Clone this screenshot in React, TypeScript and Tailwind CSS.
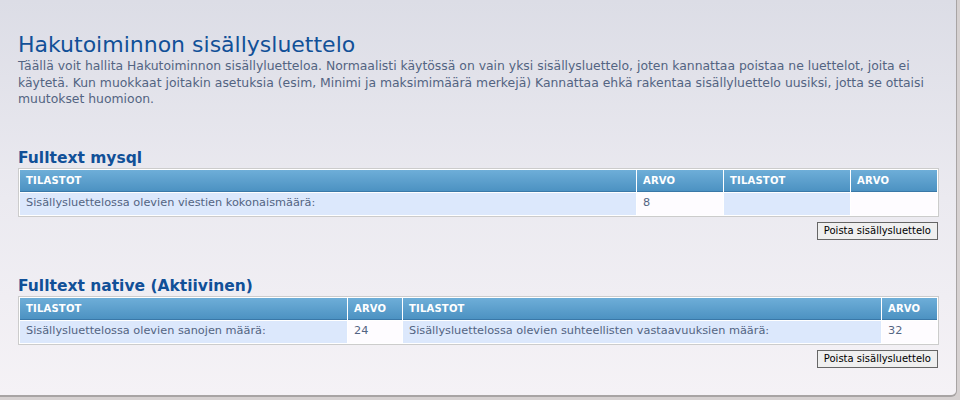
import React from "react";

type Cell = { label: string; width: number };

const font = { fontFamily: '"DejaVu Sans", Verdana, sans-serif' };

function StatsTable({ cols, row }: { cols: Cell[]; row: string[] }) {
  return (
    <table className="w-[920px] border-separate border-spacing-[1px] border border-[#cccccc] bg-white table-fixed">
      <thead>
        <tr>
          {cols.map((c, i) => (
            <th
              key={i}
              style={{ width: c.width }}
              className="h-[22px] px-[6px] text-left text-[10px] font-bold uppercase tracking-[0.2px] text-white bg-gradient-to-b from-[#6eaed8] to-[#4c92c2] border-b border-[#3a78a8]"
            >
              {c.label}
            </th>
          ))}
        </tr>
      </thead>
      <tbody>
        <tr>
          {row.map((v, i) => (
            <td
              key={i}
              className={`h-[22px] px-[6px] text-[11.3px] text-[#536482] ${i % 2 === 0 ? "bg-[#dce8fc]" : "bg-[#fefcff]"}`}
            >
              {v}
            </td>
          ))}
        </tr>
      </tbody>
    </table>
  );
}

function DeleteButton() {
  return (
    <div className="flex justify-end w-[920px] mt-[5px]">
      <button className="h-[18px] px-[6px] text-[10px] text-black bg-[#efefef] border border-[#666666] leading-none">
        Poista sisällysluettelo
      </button>
    </div>
  );
}

export default function App() {
  return (
    <div className="w-[960px] h-[400px] bg-[#d6d1d1] overflow-hidden" style={font}>
      <div className="w-[957px] h-[397px] rounded-br-[6px] border-b-2 border-r border-[#a8a4a4] bg-gradient-to-b from-[#dcdde6] via-[#ebeaf0] to-[#f5f2f6] pl-[18px] pt-[32px]">
        <h1 className="text-[22px] leading-[26px] text-[#115098]">Hakutoiminnon sisällysluettelo</h1>
        <p className="w-[920px] text-[12.4px] leading-[16.5px] text-[#536482]">
          Täällä voit hallita Hakutoiminnon sisällyluetteloa. Normaalisti käytössä on vain yksi sisällysluettelo, joten kannattaa poistaa ne luettelot, joita ei käytetä. Kun muokkaat joitakin asetuksia (esim, Minimi ja maksimimäärä merkejä) Kannattaa ehkä rakentaa sisällyluettelo uusiksi, jotta se ottaisi muutokset huomioon.
        </p>

        <h3 className="mt-[40px] text-[15.5px] leading-[20px] font-bold text-[#115098]">Fulltext mysql</h3>
        <StatsTable
          cols={[
            { label: "Tilastot", width: 616 },
            { label: "Arvo", width: 86 },
            { label: "Tilastot", width: 126 },
            { label: "Arvo", width: 86 },
          ]}
          row={["Sisällysluettelossa olevien viestien kokonaismäärä:", "8", "", ""]}
        />
        <DeleteButton />

        <h3 className="mt-[36px] text-[15.5px] leading-[20px] font-bold text-[#115098]">Fulltext native (Aktiivinen)</h3>
        <StatsTable
          cols={[
            { label: "Tilastot", width: 327 },
            { label: "Arvo", width: 54 },
            { label: "Tilastot", width: 478 },
            { label: "Arvo", width: 55 },
          ]}
          row={[
            "Sisällysluettelossa olevien sanojen määrä:",
            "24",
            "Sisällysluettelossa olevien suhteellisten vastaavuuksien määrä:",
            "32",
          ]}
        />
        <DeleteButton />
      </div>
    </div>
  );
}
